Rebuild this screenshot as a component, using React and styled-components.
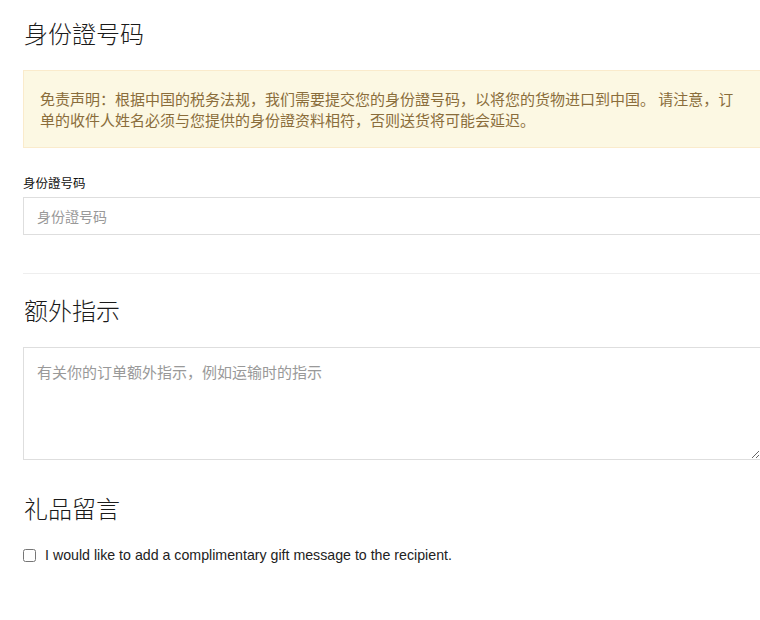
import React from "react";
import styled, { createGlobalStyle } from "styled-components";

const Global = createGlobalStyle`
  html, body { margin: 0; padding: 0; background: #fff; overflow-x: hidden; }
  body {
    font-family: "Noto Sans CJK SC", "Noto Sans", sans-serif;
    color: #333;
    text-spacing-trim: space-all;
  }
  * { box-sizing: border-box; }
`;

const Page = styled.div`
  padding: 17px 0 40px 23px;
  width: 761px;
`;

const Section = styled.section`
  display: flex;
  flex-direction: column;
`;

const Heading = styled.h2`
  margin: ${(p) => p.$top || 0}px 0 21px;
  font-size: 24px;
  line-height: 32px;
  font-weight: 300;
  color: #1a1a1a;
  padding-left: 1px;
`;

const Alert = styled.div`
  background: #fcf8e3;
  border: 1px solid #faebcc;
  color: #8a6d3b;
  padding: 17px 16px;
  font-size: 15px;
  line-height: 21px;
`;

const Label = styled.label`
  display: block;
  margin: 26px 0 5px;
  font-size: 12.5px;
  line-height: 18px;
  color: #111;
`;

const fieldBase = `
  width: 100%;
  border: 1px solid #dedede;
  background: #fff;
  font-family: "Noto Sans CJK SC", "Noto Sans", sans-serif;
  text-spacing-trim: space-all;
  color: #333;
  outline: none;
  border-radius: 0;
  &::placeholder { color: #999; opacity: 1; }
`;

const Input = styled.input`
  ${fieldBase}
  height: 38px;
  padding: 0 13px;
  font-size: 14px;
`;

const TextArea = styled.textarea`
  ${fieldBase}
  height: 113px;
  padding: 13px 13px;
  font-size: 15px;
  line-height: 21px;
  resize: both;
  display: block;
`;

const Divider = styled.hr`
  border: 0;
  border-top: 1px solid #eee;
  margin: 38px 0 0;
  height: 0;
`;

const CheckRow = styled.label`
  display: flex;
  align-items: center;
  gap: 9px;
  font-family: "Liberation Sans", Arial, sans-serif;
  font-size: 14.2px;
  line-height: 20px;
  color: #222;
`;

const Check = styled.input`
  margin: 0;
  width: 13px;
  height: 13px;
`;

export default function App() {
  return (
    <>
      <Global />
      <Page>
        <Section>
          <Heading>身份證号码</Heading>
          <Alert>
            免责声明：根据中国的税务法规，我们需要提交您的身份證号码，以将您的货物进口到中国。 请注意，订单的收件人姓名必须与您提供的身份證资料相符，否则送货将可能会延迟。
          </Alert>
          <Label htmlFor="idnum">身份證号码</Label>
          <Input id="idnum" type="text" placeholder="身份證号码" />
        </Section>
        <Divider />
        <Section>
          <Heading $top={20}>额外指示</Heading>
          <TextArea placeholder="有关你的订单额外指示，例如运输时的指示" />
        </Section>
        <Section>
          <Heading $top={32}>礼品留言</Heading>
          <CheckRow>
            <Check type="checkbox" />
            I would like to add a complimentary gift message to the recipient.
          </CheckRow>
        </Section>
      </Page>
    </>
  );
}
